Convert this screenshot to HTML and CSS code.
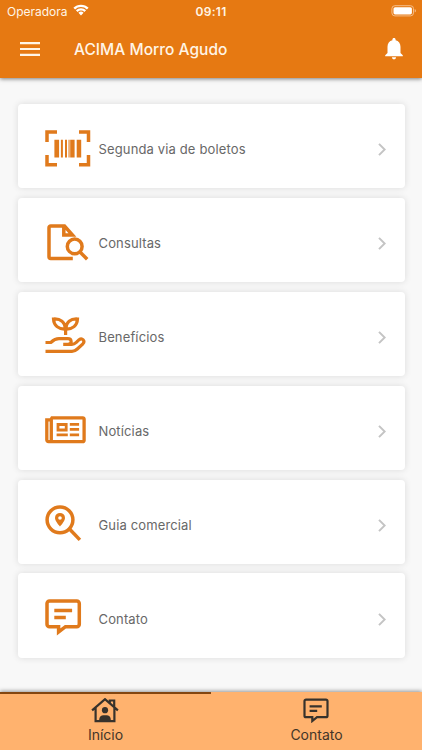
FILE: index.html
```html
<!DOCTYPE html>
<html lang="pt-BR">
<head>
<meta charset="utf-8">
<title>ACIMA Morro Agudo</title>
<link rel="stylesheet" href="styles.css">
</head>
<body>
<header class="header">
  <div class="status">
    <div class="carrier"><span>Operadora</span>
      <svg class="wifi" width="16" height="12" viewBox="0 0 16 12"><path d="M8 11.4 5.4 8.8a3.7 3.7 0 0 1 5.2 0zM4.6 8 2.9 6.3a7.2 7.2 0 0 1 10.2 0L11.4 8a4.8 4.8 0 0 0-6.8 0zM2.1 5.5.4 3.8a10.8 10.8 0 0 1 15.2 0l-1.7 1.7a8.4 8.4 0 0 0-11.8 0z"/></svg>
    </div>
    <time class="clock">09:11</time>
    <svg class="battery" width="26" height="12" viewBox="0 0 26 12"><rect class="battery-case" x=".9" y=".7" width="21.6" height="10.2" rx="3"/><rect x="2.5" y="2.2" width="18.4" height="7.2" rx="1.6"/><path class="battery-tip" d="M23.7 4q1.3.6 1.3 1.8t-1.3 1.8z"/></svg>
  </div>
  <div class="toolbar">
    <svg class="menu" width="20" height="14" viewBox="0 0 20 14"><path d="M0 1.1h20M0 7h20M0 12.9h20"/></svg>
    <h1 class="title">ACIMA Morro Agudo</h1>
    <svg class="bell" width="18" height="22" viewBox="0 0 18 22"><path d="M9 0C8 0 7.4.7 7.4 1.5v.7C4.300 2.900 2.500 5.500 2.500 8.700V15L.2 17.200v1h17.600v-1L15.500 15V8.700c0-3.200-1.800-5.800-4.900-6.500v-.7C10.600.7 10 0 9 0zM6.900 19.300a2.100 2.100 0 0 0 4.200 0z"/></svg>
  </div>
</header>

<main class="list">
  <a class="card">
    <svg class="icon" viewBox="0 0 46 37"><path d="M2 12V2h10M34 2h9.500v10M43.500 25v9.700H34M12 34.700H2V25"/><path class="solid" d="M9.400 9.700h4.700v17.700H9.400zM15.900 9.700h2v17.700h-2zM20 9.700h2v17.700h-2zM23.500 9.700h1.100v17.700h-1.100zM25.200 9.700h4.400v17.700h-4.400zM31.700 9.700h4.500v17.700h-4.500z"/></svg>
    <span class="label">Segunda via de boletos</span>
    <svg class="chevron" viewBox="0 0 8 13"><path d="m1 .9 5.700 5.600L1 12.100"/></svg>
  </a>
  <a class="card">
    <svg class="icon" viewBox="0 0 46 37"><path d="M27.800 34.500H5.700a1.700 1.700 0 0 1-1.700-1.700V3.700A1.700 1.700 0 0 1 5.700 2H19.500l8 9.100H18.800V2.500"/><circle cx="29.700" cy="22.400" r="7.400"/><path d="m35 28 7.200 7.300"/></svg>
    <span class="label">Consultas</span>
    <svg class="chevron" viewBox="0 0 8 13"><path d="m1 .9 5.700 5.600L1 12.100"/></svg>
  </a>
  <a class="card">
    <svg class="icon plant" viewBox="0 0 46 37"><path d="M20.600 18v-6.200M20.600 12C13.500 12.500 8.800 8.500 8.500 2 15.500 1.500 20 5.200 20.600 12zM20.600 12C27.600 12.500 32.200 8.500 32.500 2 25.500 1.500 21.200 5.200 20.600 12z"/><path d="M.5 25.500h5.300c3.200-2.900 4.900-3.800 8.200-3.800h8.800c4.200 0 4.700 5.700 0 5.700h-4.600M23.500 27.400h3.300c1.800 0 3.100-.7 4.500-2l2.800-2.700c3.100-2.400 6.400 1.200 3.800 4.100l-5.600 5.200c-1.900 1.700-2.700 2.300-5.300 2.300H.5"/></svg>
    <span class="label">Benefícios</span>
    <svg class="chevron" viewBox="0 0 8 13"><path d="m1 .9 5.700 5.600L1 12.100"/></svg>
  </a>
  <a class="card">
    <svg class="icon news" viewBox="0 -.5 46 37"><path d="M7 30.200H3.500A1.700 1.700 0 0 1 1.800 28.400V8.300H5.800L7 6.300H37.900a1.200 1.200 0 0 1 1.200 1.200v21.500a1.200 1.200 0 0 1-1.200 1.200H5.200M6.300 8.300v20c0 1.200-.7 1.900-1.700 1.900"/><path class="news-lines" d="M13 13h8.200v5.500H13zM24.800 12.900h9.300M24.800 17.900h9.300M24.800 23.400h9.300M11.600 23.400h11.200"/></svg>
    <span class="label">Notícias</span>
    <svg class="chevron" viewBox="0 0 8 13"><path d="m1 .9 5.700 5.600L1 12.100"/></svg>
  </a>
  <a class="card">
    <svg class="icon" viewBox="0 0 46 37"><circle cx="15" cy="14.800" r="12.900"/><path d="m24.500 24 10.400 10.900"/><path class="solid" fill-rule="evenodd" d="M15 7.900a5 5 0 0 0-5 5c0 3.200 5 8.500 5 8.500s5-5.300 5-8.500a5 5 0 0 0-5-5zm0 3.300a1.800 1.800 0 1 1 0 3.600 1.800 1.800 0 0 1 0-3.600z"/></svg>
    <span class="label">Guia comercial</span>
    <svg class="chevron" viewBox="0 0 8 13"><path d="m1 .9 5.700 5.600L1 12.100"/></svg>
  </a>
  <a class="card">
    <svg class="icon" viewBox="0 0 46 37"><path d="M4.500 2h27.300a2.500 2.500 0 0 1 2.500 2.500v20.700a2.500 2.500 0 0 1-2.500 2.500H20.500L13.600 33v-5.300H4.500A2.500 2.500 0 0 1 2 25.200V4.500A2.500 2.500 0 0 1 4.500 2zM9.300 11.500h17.800M9.300 18.400h11.500"/></svg>
    <span class="label">Contato</span>
    <svg class="chevron" viewBox="0 0 8 13"><path d="m1 .9 5.700 5.600L1 12.100"/></svg>
  </a>
</main>

<nav class="tabs">
  <a class="tab active">
    <svg class="tab-icon" width="28" height="25" viewBox="0 0 28 25"><path d="M1.100 12.300 14 1.200l12.900 11.100M4.600 10v13.200h18.800V10M18.800 4.700V2.500h4.400v6"/><circle class="dark" cx="14" cy="12.200" r="3.100"/><path class="dark" d="M8.200 23v-1.300c0-3.200 2.100-4.500 4.200-4.500h3.200c2.100 0 4.200 1.300 4.200 4.500V23z"/></svg>
    <span>Início</span>
  </a>
  <a class="tab">
    <svg class="tab-icon" width="28" height="25" viewBox="0 0 28 25"><path d="M4 1.600h20a1.500 1.500 0 0 1 1.500 1.500v14.600a1.500 1.500 0 0 1-1.500 1.500h-9L10.300 23v-3.800H4a1.500 1.500 0 0 1-1.500-1.500V3.100A1.500 1.500 0 0 1 4 1.600zM7.600 8.300h12.200M7.600 12.900h7.600"/></svg>
    <span>Contato</span>
  </a>
</nav>
</body>
</html>
```
FILE: styles.css
```css
* { box-sizing: border-box; }
body {
  margin: 0;
  width: 422px;
  height: 750px;
  overflow: hidden;
  display: flex;
  flex-direction: column;
  background: #f8f8f8;
  font-family: Inter, "Liberation Sans", sans-serif;
}
svg { display: block; flex: none; }

.header {
  height: 78px;
  flex: none;
  background: #e67912;
  color: #fff5e6;
  box-shadow: 0 1px 4px rgba(0, 0, 0, .5);
}
.status {
  height: 22px;
  padding: 0 5px 0 7px;
  display: grid;
  grid-template-columns: 1fr auto 1fr;
  align-items: center;
  font-size: 12px;
}
.carrier { display: flex; align-items: center; gap: 5px; letter-spacing: 0; }
.wifi { margin-top: -2px; fill: #fff; }
.clock { margin-right: 2px; font-weight: 600; letter-spacing: .3px; }
.battery { justify-self: end; margin-top: -1px; fill: #fff; }
.battery-case { fill: none; stroke: #f5bd88; stroke-width: 1; }
.battery-tip { fill: #f5bd88; }
.toolbar {
  height: 54px;
  padding: 0 19px 0 20px;
  display: flex;
  align-items: center;
}
.menu { fill: none; stroke: #fff5e6; stroke-width: 2.1; }
.title {
  flex: 1;
  margin: 0 0 0 34px;
  font-size: 15.500px;
  font-weight: 500;
  letter-spacing: .03px;
}
.bell { fill: #fff; }

.list {
  flex: 1;
  padding: 26px 17.500px 0;
  display: flex;
  flex-direction: column;
  gap: 9.500px;
}
.card {
  height: 84.400px;
  flex: none;
  padding: 0 18.500px 0 27.500px;
  display: flex;
  align-items: center;
  background: #fff;
  border-radius: 4px;
  box-shadow: 0 0 7px rgba(0, 0, 0, .12);
}
.icon {
  width: 46px;
  height: 37px;
  margin-top: 4px;
  fill: none;
  stroke: #e07a1c;
  stroke-width: 3.500;
}
.plant { stroke-width: 3.200; }
.news { stroke-width: 3.300; }
.news-lines { stroke-width: 2.800; }
.solid { fill: #e07a1c; stroke: none; }
.label {
  flex: 1;
  margin: 6px 0 0 7.500px;
  font-size: 13px;
  color: #686868;
  letter-spacing: .14px;
}
.chevron {
  width: 8px;
  height: 13px;
  margin-top: 7px;
  fill: none;
  stroke: #c4c4c4;
  stroke-width: 2;
}

.tabs {
  height: 58px;
  flex: none;
  display: flex;
  background: #ffb26e;
  box-shadow: 0 -1px 4px rgba(0, 0, 0, .4);
}
.tab {
  flex: 1;
  padding-top: 4px;
  border-top: 2px solid transparent;
  display: flex;
  flex-direction: column;
  align-items: center;
  gap: 2px;
  font-size: 14px;
  line-height: 20px;
  letter-spacing: 0;
  color: #443628;
}
.active { border-top-color: #844610; }
.tab-icon { margin-left: -1px; fill: none; stroke: #37322c; stroke-width: 2.200; }
.dark { fill: #37322c; stroke: none; }
```
